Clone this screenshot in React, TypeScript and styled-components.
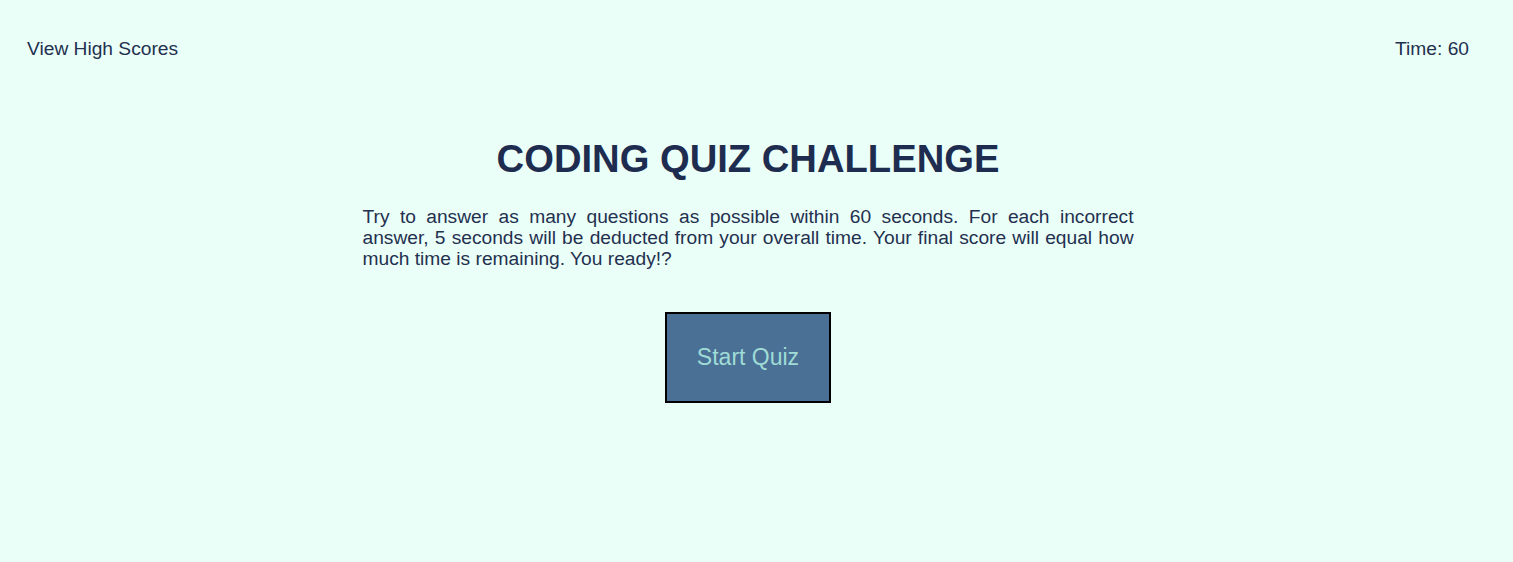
import React from "react";
import styled, { createGlobalStyle } from "styled-components";

const Global = createGlobalStyle`
  html, body {
    margin: 0;
    padding: 0;
    background: #eafff8;
  }
  body {
    font-family: "Liberation Sans", Arial, sans-serif;
    color: #1e2d4f;
  }
`;

const Page = styled.div`
  width: 1496px;
  min-height: 562px;
`;

const Header = styled.header`
  display: flex;
  justify-content: space-between;
  align-items: center;
  padding: 38px 27px 0;
  font-size: 19.2px;
  line-height: 22px;
`;

const HeaderLink = styled.a`
  color: #24304f;
  text-decoration: none;
  cursor: pointer;
`;

const Timer = styled.span`
  color: #24304f;
`;

const Main = styled.main`
  width: 771px;
  margin: 77px auto 0;
  display: flex;
  flex-direction: column;
  align-items: center;
`;

const Title = styled.h1`
  margin: 0;
  font-size: 38.2px;
  font-weight: bold;
  color: #1e2d4f;
`;

const Intro = styled.p`
  margin: 25px 0 0;
  font-size: 19.2px;
  line-height: 21px;
  text-align: justify;
  color: #24304f;
`;

const StartButton = styled.button`
  margin-top: 43px;
  padding: 30px;
  border: 2px solid #000;
  background: #4b7096;
  color: #9fdcd6;
  font-family: "Liberation Sans", Arial, sans-serif;
  font-size: 23px;
  cursor: pointer;
`;

export default function App() {
  return (
    <Page>
      <Global />
      <Header>
        <HeaderLink>View High Scores</HeaderLink>
        <Timer>Time: 60</Timer>
      </Header>
      <Main>
        <Title>CODING QUIZ CHALLENGE</Title>
        <Intro>
          Try to answer as many questions as possible within 60 seconds. For each incorrect
          answer, 5 seconds will be deducted from your overall time. Your final score will equal
          how much time is remaining. You ready!?
        </Intro>
        <StartButton>Start Quiz</StartButton>
      </Main>
    </Page>
  );
}
